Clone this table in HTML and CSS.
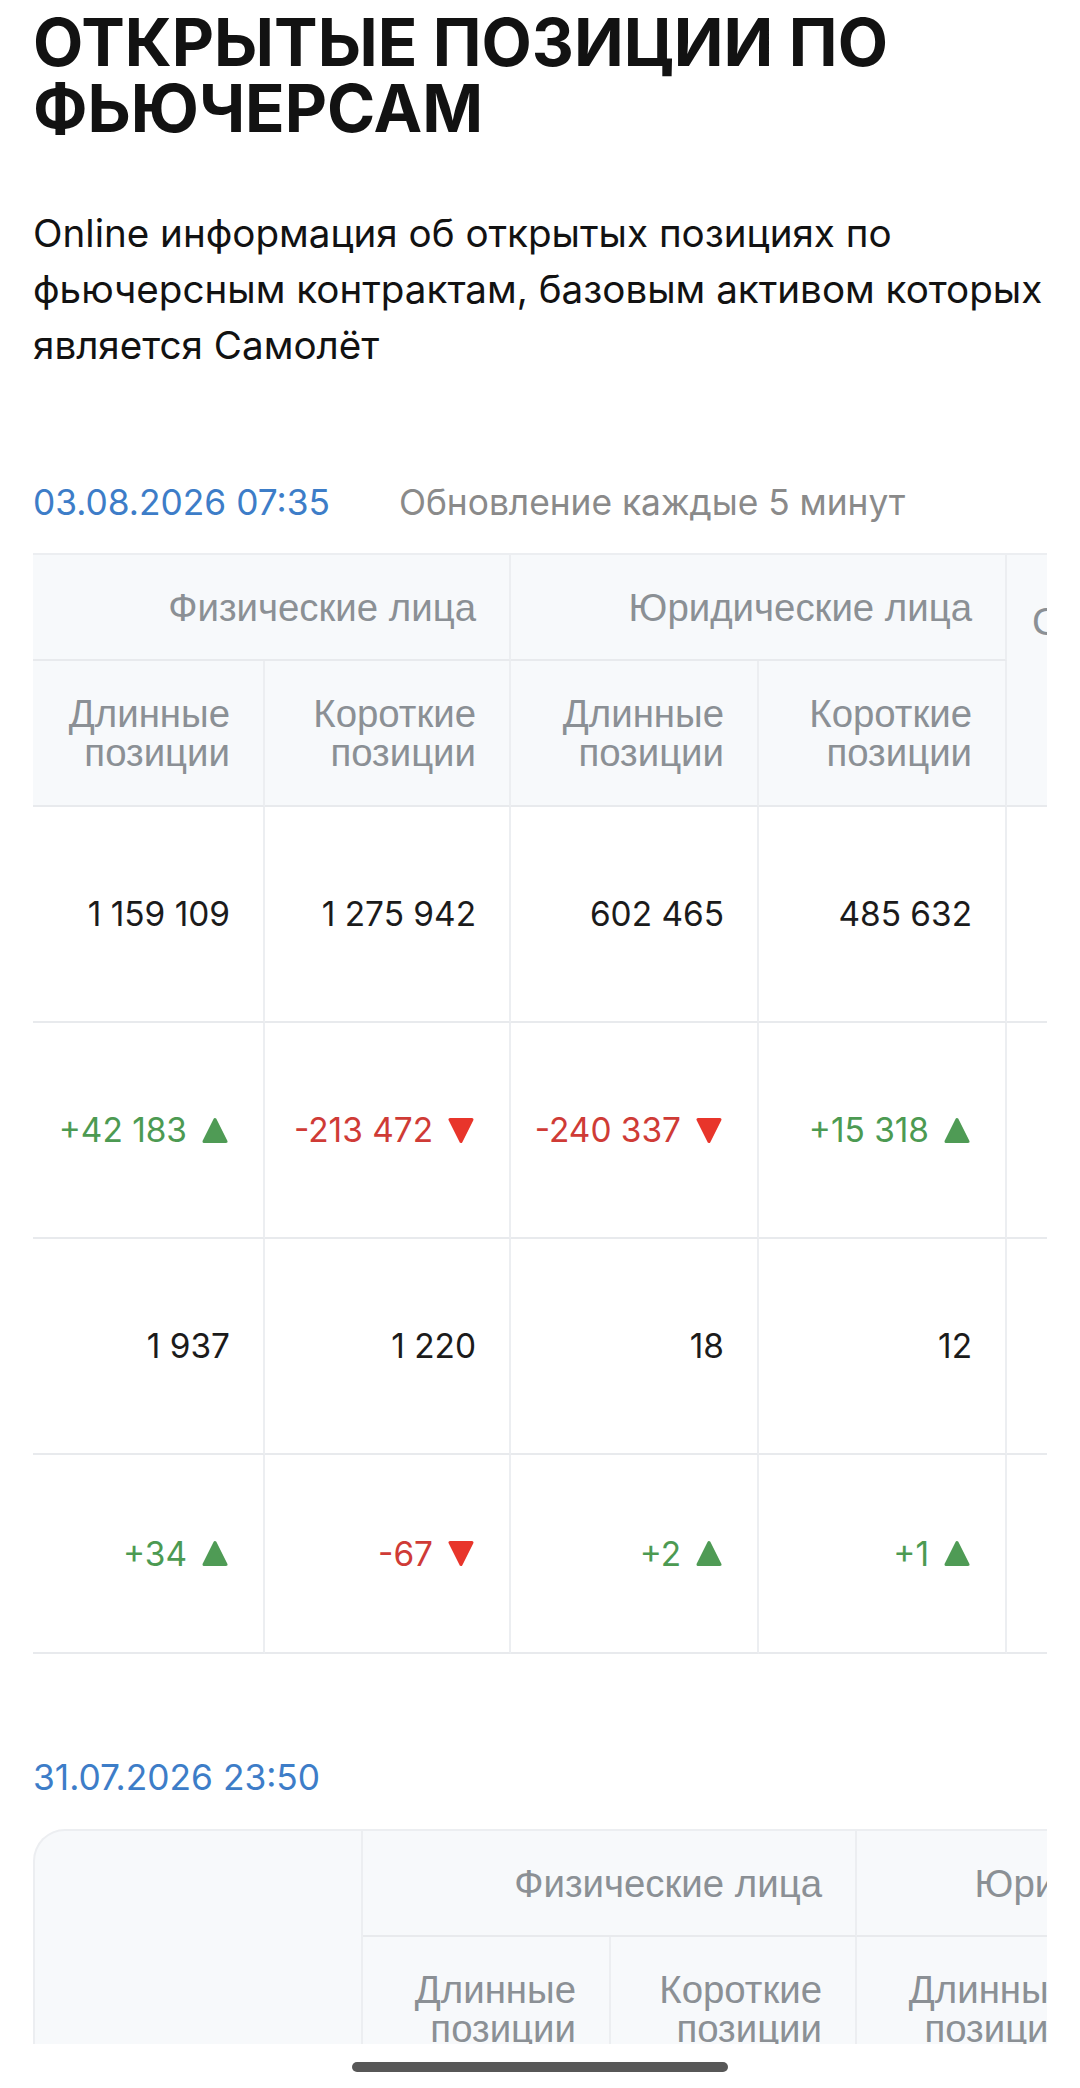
FILE: index.html
```html
<!DOCTYPE html>
<html lang="ru">
<head>
<meta charset="utf-8">
<title>Открытые позиции по фьючерсам</title>
<link rel="stylesheet" href="styles.css">
</head>
<body>
<div class="screen">
  <main class="page">
    <h1 class="title">ОТКРЫТЫЕ ПОЗИЦИИ ПО ФЬЮЧЕРСАМ</h1>
    <p class="lead">Online информация об открытых позициях по фьючерсным контрактам, базовым активом которых является Самолёт</p>

    <section class="snapshot">
      <div class="stamp">
        <span class="date">03.08.2026 07:35</span>
        <span class="note">Обновление каждые 5 минут</span>
      </div>
      <div class="scroller">
        <table class="grid grid--scrolled">
          <colgroup>
            <col class="c-part">
            <col class="c-246">
            <col class="c-248">
            <col class="c-248">
            <col class="c-248">
          </colgroup>
          <thead>
            <tr class="head-group">
              <th colspan="2">Физические лица</th>
              <th colspan="2">Юридические лица</th>
              <th rowspan="2" class="cut">Суммарно</th>
            </tr>
            <tr class="head-sub">
              <th>Длинные<br>позиции</th>
              <th>Короткие<br>позиции</th>
              <th>Длинные<br>позиции</th>
              <th>Короткие<br>позиции</th>
            </tr>
          </thead>
          <tbody>
            <tr>
              <td>1 159 109</td>
              <td>1 275 942</td>
              <td>602 465</td>
              <td>485 632</td>
              <td>3 523 148</td>
            </tr>
            <tr>
              <td><span class="delta up">+42 183<svg class="tri" viewBox="0 0 26 27" aria-hidden="true"><path d="M13 2.5 L24 24.5 H2 Z"/></svg></span></td>
              <td><span class="delta down">-213 472<svg class="tri" viewBox="0 0 26 27" aria-hidden="true"><path d="M2 2.5 H24 L13 24.5 Z"/></svg></span></td>
              <td><span class="delta down">-240 337<svg class="tri" viewBox="0 0 26 27" aria-hidden="true"><path d="M2 2.5 H24 L13 24.5 Z"/></svg></span></td>
              <td><span class="delta up">+15 318<svg class="tri" viewBox="0 0 26 27" aria-hidden="true"><path d="M13 2.5 L24 24.5 H2 Z"/></svg></span></td>
              <td></td>
            </tr>
            <tr>
              <td>1 937</td>
              <td>1 220</td>
              <td>18</td>
              <td>12</td>
              <td></td>
            </tr>
            <tr class="last">
              <td><span class="delta up">+34<svg class="tri" viewBox="0 0 26 27" aria-hidden="true"><path d="M13 2.5 L24 24.5 H2 Z"/></svg></span></td>
              <td><span class="delta down">-67<svg class="tri" viewBox="0 0 26 27" aria-hidden="true"><path d="M2 2.5 H24 L13 24.5 Z"/></svg></span></td>
              <td><span class="delta up">+2<svg class="tri" viewBox="0 0 26 27" aria-hidden="true"><path d="M13 2.5 L24 24.5 H2 Z"/></svg></span></td>
              <td><span class="delta up">+1<svg class="tri" viewBox="0 0 26 27" aria-hidden="true"><path d="M13 2.5 L24 24.5 H2 Z"/></svg></span></td>
              <td></td>
            </tr>
          </tbody>
        </table>
      </div>
    </section>

    <section class="snapshot snapshot--next">
      <div class="stamp">
        <span class="date">31.07.2026 23:50</span>
      </div>
      <div class="scroller">
        <table class="grid grid--full">
          <colgroup>
            <col class="c-label">
            <col class="c-248">
            <col class="c-246">
            <col class="c-248">
            <col class="c-248">
            <col class="c-248">
          </colgroup>
          <thead>
            <tr class="head-group">
              <th rowspan="2" class="corner"></th>
              <th colspan="2">Физические лица</th>
              <th colspan="2">Юридические лица</th>
              <th rowspan="2">Суммарно</th>
            </tr>
            <tr class="head-sub">
              <th>Длинные<br>позиции</th>
              <th>Короткие<br>позиции</th>
              <th>Длинные<br>позиции</th>
              <th>Короткие<br>позиции</th>
            </tr>
          </thead>
        </table>
      </div>
    </section>
  </main>
  <div class="home-bar"><span class="home-indicator"></span></div>
</div>
</body>
</html>
```

FILE: styles.css
```css
* {
  box-sizing: border-box;
}

html,
body {
  margin: 0;
  padding: 0;
  background: #ffffff;
}

body {
  font-family: Inter, "Noto Sans", "Liberation Sans", sans-serif;
  color: #141414;
}

.screen {
  width: 1080px;
  height: 2088px;
  display: flex;
  flex-direction: column;
  overflow: hidden;
}

.page {
  flex: none;
  height: 2044px;
  overflow: hidden;
  padding: 0 33px;
}

.title {
  margin: 10px 0 0;
  font-family: Inter, "Noto Sans", sans-serif;
  font-weight: 700;
  font-size: 65.3px;
  line-height: 66px;
  color: #121212;
}

.lead {
  margin: 63px 0 0;
  font-size: 38.6px;
  line-height: 56px;
  font-weight: 400;
  color: #121212;
}

.snapshot {
  margin-top: 108px;
}

.snapshot--next {
  margin-top: 102px;
}

.stamp {
  display: flex;
  align-items: baseline;
  gap: 69px;
  height: 44px;
  line-height: 44px;
  font-size: 35.3px;
}

.date {
  color: #3d7dc8;
}

.note {
  color: #8a8a8a;
}

.scroller {
  margin-top: 28px;
  overflow: hidden;
}

.snapshot--next .scroller {
  margin-top: 29px;
}

.grid {
  border-collapse: separate;
  border-spacing: 0;
  table-layout: fixed;
}

.grid--scrolled {
  width: 1222px;
}

.grid--full {
  width: 1568px;
}

.c-part { width: 232px; }
.c-246 { width: 246px; }
.c-248 { width: 248px; }
.c-label { width: 330px; }

.grid th,
.grid td {
  padding: 0 33px 0 0;
  text-align: right;
  vertical-align: middle;
  border-right: 2px solid #eceef1;
  border-bottom: 2px solid #e8eaed;
  white-space: nowrap;
}

.grid th {
  font-family: "Liberation Sans", Arial, sans-serif;
  font-weight: 400;
  font-size: 38.4px;
  line-height: 39px;
  color: #8b9095;
  background: #f7f9fb;
}

.head-group th {
  height: 108px;
  border-top: 2px solid #eceef1;
}

.head-sub th {
  height: 146px;
}

.grid .cut {
  text-align: left;
  vertical-align: top;
  padding: 47px 0 0 25px;
}

.grid .corner {
  border-left: 2px solid #eceef1;
  border-top-left-radius: 32px;
}

.grid td {
  height: 216px;
  font-size: 33.4px;
  font-weight: 400;
  color: #1b1b1b;
}

.grid tr.last td {
  height: 199px;
}

.delta {
  display: inline-flex;
  align-items: center;
  gap: 15px;
}

.tri {
  width: 26px;
  height: 27px;
  margin-right: 2px;
  stroke-width: 3;
  stroke-linejoin: round;
}

.up {
  color: #4c9a52;
}

.up .tri {
  fill: #4f9b55;
  stroke: #4f9b55;
}

.down {
  color: #cf3b36;
}

.down .tri {
  fill: #e8352b;
  stroke: #e8352b;
}

.home-bar {
  flex: 1;
  display: flex;
  justify-content: center;
  align-items: flex-start;
  padding-top: 18px;
  background: #ffffff;
}

.home-indicator {
  width: 376px;
  height: 10px;
  border-radius: 5px;
  background: #575757;
}
```
